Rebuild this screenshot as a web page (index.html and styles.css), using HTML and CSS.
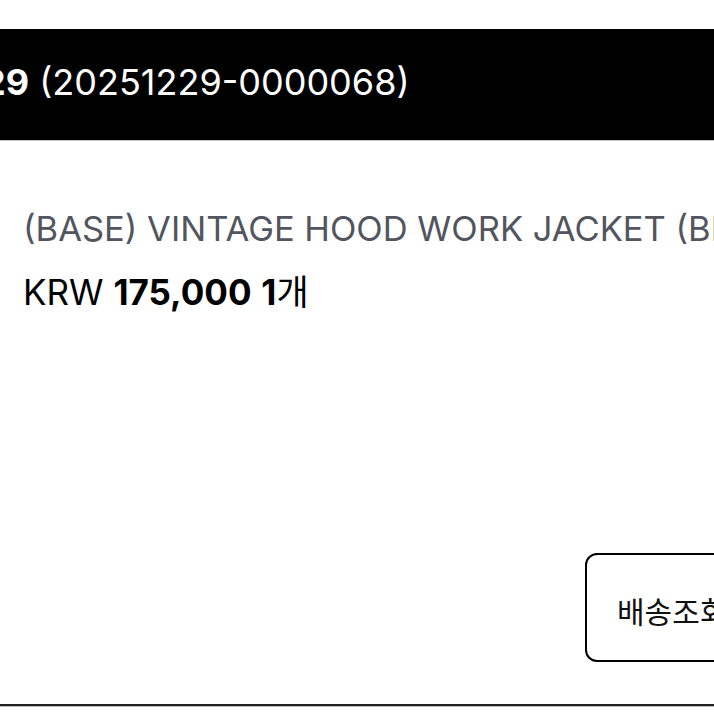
FILE: index.html
```html
<!DOCTYPE html>
<html lang="ko">
<head>
  <meta charset="UTF-8">
  <meta name="viewport" content="width=device-width, initial-scale=1.0">
  <title>주문상세</title>
  <link rel="stylesheet" href="styles.css">
</head>
<body>
  <div class="page">
    <div class="order-head">
      <span class="order-no"><b>29</b> (20251229-0000068)</span>
    </div>

    <div class="order-item">
      <p class="item-name">(BASE) VINTAGE HOOD WORK JACKET (BLACK)</p>
      <p class="item-price">KRW <b>175,000</b> <b>1</b>개</p>
    </div>

    <div class="item-actions">
      <button class="track-button">배송조회</button>
    </div>

    <div class="divider"></div>
  </div>
</body>
</html>
```

FILE: styles.css
```css
html, body {
  margin: 0;
  padding: 0;
  background-color: #fff;
}

body {
  width: 714px;
  height: 714px;
  overflow: hidden;
  font-family: Inter, "Noto Sans CJK KR", sans-serif;
}

.page {
  padding-top: 29px;
  white-space: nowrap;
}

.order-head {
  height: 80px;
  padding-top: 31px;
  background-color: #000;
  border-bottom: 1px solid #c4c4c4;
  line-height: 44px;
}

.order-no {
  display: inline-block;
  color: #fff;
  font-size: 36px;
  margin-left: -17px;
}

.order-no b {
  font-weight: 700;
}

.order-item {
  padding: 68px 0 0 23px;
}

.item-name {
  margin: 0;
  font-size: 34.5px;
  line-height: 40px;
  color: #52555d;
}

.item-price {
  margin: 23px 0 0;
  font-size: 35px;
  line-height: 40px;
  color: #000;
}

.item-price b {
  font-weight: 700;
}

.item-actions {
  display: flex;
  padding: 241px 0 0 585px;
}

.track-button {
  width: 200px;
  height: 109px;
  flex-shrink: 0;
  background-color: #fff;
  border: 2px solid #000;
  border-radius: 12px;
  padding: 4px 0 0 30px;
  text-align: left;
  font-family: "Noto Sans CJK KR", sans-serif;
  font-size: 30px;
  color: #111;
}

.divider {
  margin-top: 42px;
  height: 2px;
  background-color: #222;
  border-bottom: 1px solid #bbb;
}
```
